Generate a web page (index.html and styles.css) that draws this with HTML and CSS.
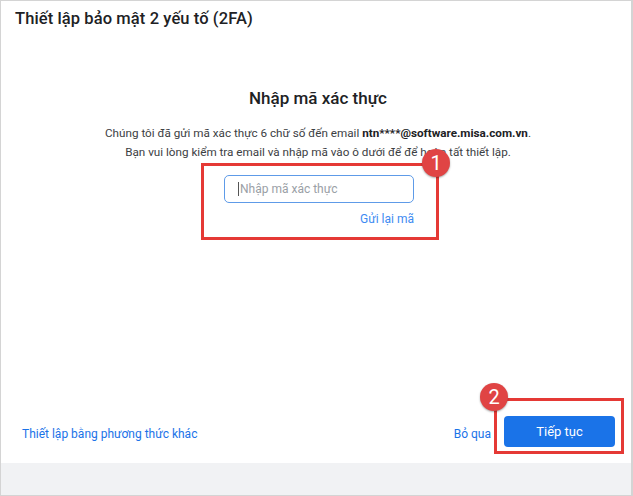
FILE: index.html
```html
<!DOCTYPE html>
<html lang="vi">
<head>
<meta charset="utf-8">
<title>Thiết lập bảo mật 2 yếu tố (2FA)</title>
<link rel="stylesheet" href="styles.css">
</head>
<body>
<div class="frame">
  <div class="header">
    <h1 class="title">Thiết lập bảo mật 2 yếu tố (2FA)</h1>
  </div>
  <div class="content">
    <h2 class="heading">Nhập mã xác thực</h2>
    <p class="desc">Chúng tôi đã gửi mã xác thực 6 chữ số đến email <b>ntn****@software.misa.com.vn</b>.<br>Bạn vui lòng kiểm tra email và nhập mã vào ô dưới để để hoàn tất thiết lập.</p>
    <div class="code-group">
      <div class="input"><span class="caret"></span><span class="placeholder">Nhập mã xác thực</span></div>
      <a class="resend">Gửi lại mã</a>
    </div>
  </div>
  <div class="actions">
    <a class="link">Thiết lập bằng phương thức khác</a>
    <div class="right">
      <a class="link">Bỏ qua</a>
      <button class="btn">Tiếp tục</button>
    </div>
  </div>
  <div class="footer"></div>

  <div class="mark mark1"></div>
  <div class="badge badge1">1</div>
  <div class="mark mark2"></div>
  <div class="badge badge2">2</div>
</div>
</body>
</html>
```
FILE: styles.css
```css
* { box-sizing: border-box; }
html, body { margin: 0; padding: 0; background: #fff; }
body { font-family: Roboto, "Noto Sans", Arial, sans-serif; color: #202124; }

.frame {
  position: relative;
  width: 633px;
  height: 496px;
  border: 1px solid #d4d4d4;
  border-right-width: 2px;
  display: flex;
  flex-direction: column;
  background: #fff;
}

.header { padding: 8px 14px 0; height: 38px; }
.title {
  margin: 0;
  font-size: 16.5px;
  line-height: 20px;
  font-weight: 500;
  color: #202124;
  letter-spacing: 0.1px;
}

.content {
  flex: 1;
  display: flex;
  flex-direction: column;
  align-items: center;
}
.heading {
  margin: 48px 0 0 4px;
  font-size: 17px;
  line-height: 22px;
  font-weight: 500;
  color: #202124;
}
.desc {
  margin: 15px 0 0 4px;
  text-align: center;
  font-size: 11.7px;
  line-height: 19px;
  color: #3c4043;
}
.desc b { font-weight: 700; color: #202124; }

.code-group {
  margin: 13px 0 0 6px;
  width: 190px;
  display: flex;
  flex-direction: column;
  align-items: flex-end;
}
.input {
  width: 190px;
  height: 28px;
  border: 1px solid #5e9be8;
  border-radius: 5px;
  display: flex;
  align-items: center;
  padding-left: 13px;
  gap: 1px;
}
.caret { width: 1px; height: 14px; background: #555; }
.placeholder { font-size: 12px; color: #9aa0a6; }
.resend {
  margin-top: 8px;
  font-size: 12px;
  line-height: 16px;
  color: #3d8bf2;
}

.actions {
  height: 69px;
  display: flex;
  align-items: center;
  justify-content: space-between;
  padding: 6px 16px 0 21px;
}
.right { display: flex; align-items: center; gap: 13px; }
.link {
  font-size: 12px;
  color: #1a73e8;
  padding-top: 5px;
}
.btn {
  width: 111px;
  height: 31px;
  border: none;
  border-radius: 4px;
  background: #1a73e8;
  color: #fff;
  font-family: Roboto, Arial, sans-serif;
  font-size: 13px;
}

.footer { height: 32px; background: #f1f2f4; }

.mark {
  position: absolute;
  border: 3px solid #e53935;
}
.mark1 { left: 200px; top: 162px; width: 238px; height: 77px; }
.mark2 { left: 493px; top: 397px; width: 130px; height: 56px; }

.badge {
  position: absolute;
  width: 28px;
  height: 28px;
  border-radius: 50%;
  background: #e04444;
  color: #fff;
  font-family: Roboto, Arial, sans-serif;
  font-size: 20px;
  line-height: 28px;
  text-align: center;
  box-shadow: 0 1px 2px rgba(0,0,0,0.35);
}
.badge1 { left: 421px; top: 148px; }
.badge2 { left: 479px; top: 382px; }
```
